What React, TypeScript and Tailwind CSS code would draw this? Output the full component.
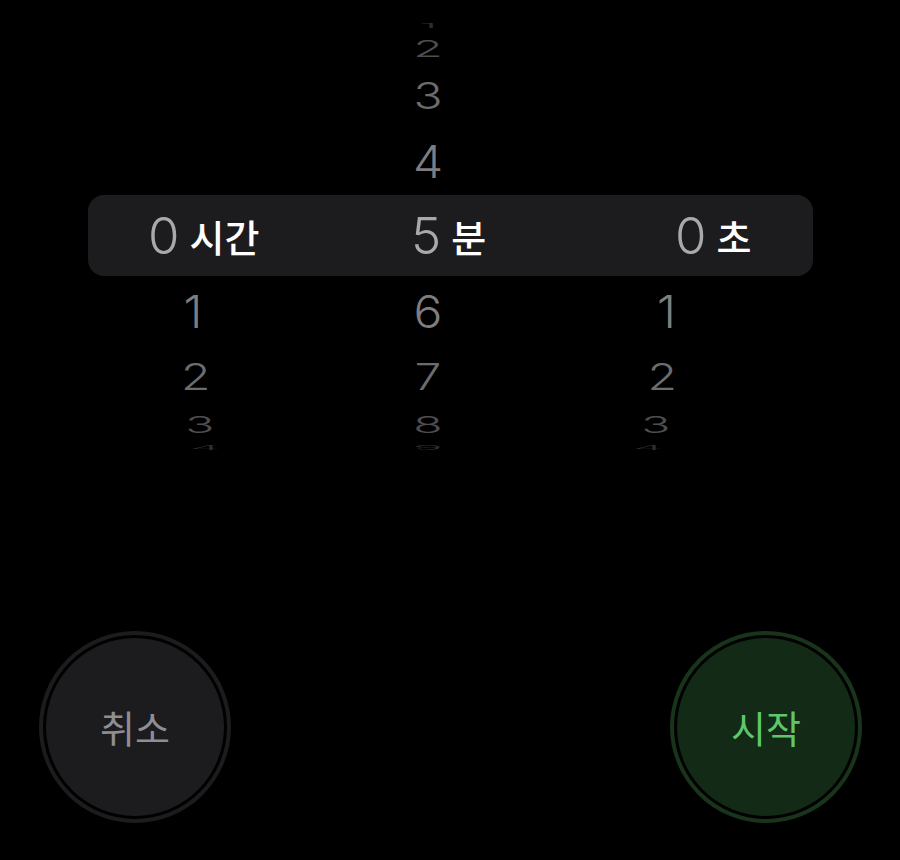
import React from "react";

const R = 213;
const STEP = (20.6 * Math.PI) / 180;
const CENTER_Y = 237;

type Col = { base: number; k: number; above: number[]; below: number[] };

const cols: Col[] = [
  { base: 192, k: 15, above: [], below: [1, 2, 3, 4] },
  { base: 428, k: 0, above: [4, 3, 2, 1], below: [6, 7, 8, 9] },
  { base: 668, k: -23, above: [], below: [1, 2, 3, 4] },
];

const colorFor = (n: number) => {
  const a = Math.abs(n);
  return ["#a9a9ad", "#7e7e80", "#6c6c6e", "#4e4e50", "#2e2e30"][a];
};

function WheelItem({ value, n, col }: { value: number; n: number; col: Col }) {
  const th = n * STEP;
  const dy = R * Math.sin(th);
  const c = Math.cos(th);
  const dx = col.k * (1 - c);
  return (
    <div
      className="absolute left-0 top-0 text-[48px] leading-none font-light"
      style={{
        transform: `translate(-50%, -50%) translate(${dx}px, ${CENTER_Y + dy}px) scaleY(${c})`,
        color: colorFor(n),
        fontFamily: "Inter, 'Liberation Sans', sans-serif",
      }}
    >
      {value}
    </div>
  );
}

function Wheel({ col }: { col: Col }) {
  return (
    <div className="absolute top-0 h-0 w-0" style={{ left: col.base }}>
      {col.above.map((v, i) => (
        <WheelItem key={"a" + v} value={v} n={-(i + 1)} col={col} />
      ))}
      {col.below.map((v, i) => (
        <WheelItem key={"b" + v} value={v} n={i + 1} col={col} />
      ))}
    </div>
  );
}

function Selected({ digit, label, width }: { digit: string; label: string; width: string }) {
  return (
    <div className={`flex items-center gap-[10px] ${width}`}>
      <span
        className="text-[51px] leading-none font-light text-[#a9a9ad]"
        style={{ fontFamily: "Inter, 'Liberation Sans', sans-serif" }}
      >
        {digit}
      </span>
      <span
        className="text-[38px] leading-none font-medium text-white"
        style={{ fontFamily: "'Noto Sans CJK KR', 'Noto Sans', sans-serif" }}
      >
        {label}
      </span>
    </div>
  );
}

function CircleButton({
  label,
  ring,
  fill,
  text,
}: {
  label: string;
  ring: string;
  fill: string;
  text: string;
}) {
  return (
    <div className={`w-[192px] h-[192px] rounded-full border-[4px] p-[3px] ${ring}`}>
      <div className={`w-full h-full rounded-full flex items-center justify-center ${fill}`}>
        <span
          className={`text-[38px] leading-none ${text}`}
          style={{ fontFamily: "'Noto Sans CJK KR', 'Noto Sans', sans-serif" }}
        >
          {label}
        </span>
      </div>
    </div>
  );
}

export default function App() {
  return (
    <div className="w-[900px] h-[860px] bg-black flex flex-col overflow-hidden">
      <div className="relative h-[470px] overflow-hidden">
        <div className="mt-[195px] ml-[88px] mr-[87px] h-[81px] rounded-[16px] bg-[#1c1c1e] flex items-center pl-[60px]">
          <Selected digit="0" label="시간" width="w-[263px]" />
          <Selected digit="5" label="분" width="w-[264px]" />
          <Selected digit="0" label="초" width="w-[120px]" />
        </div>
        {cols.map((c, i) => (
          <Wheel key={i} col={c} />
        ))}
      </div>
      <div className="mt-[161px] flex justify-between pl-[39px] pr-[38px]">
        <CircleButton label="취소" ring="border-[#1c1c1e]" fill="bg-[#1c1c1e]" text="text-[#8e8e93]" />
        <CircleButton label="시작" ring="border-[#18341b]" fill="bg-[#132a16]" text="text-[#5fc66c]" />
      </div>
    </div>
  );
}
